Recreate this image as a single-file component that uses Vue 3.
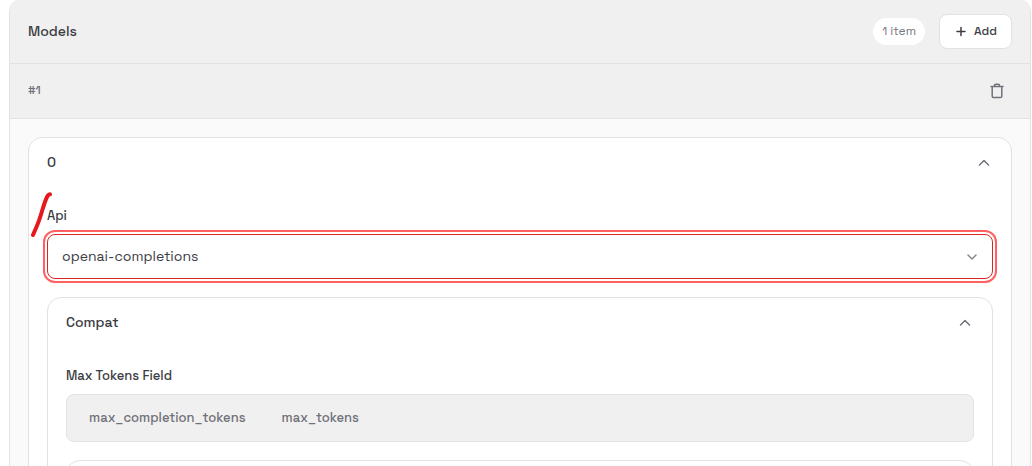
<script setup>
import { ref } from 'vue'

const api = ref('openai-completions')
const field = ref('')
const apis = ['openai-completions', 'openai-responses', 'anthropic-messages']
const fields = ['max_completion_tokens', 'max_tokens']
</script>

<template>
  <main class="page">
    <section class="panel">
      <header class="panel-head">
        <h2 class="title">Models</h2>
        <span class="count">1 item</span>
        <button type="button" class="add">
          <svg width="12" height="12" viewBox="0 0 12 12"><path d="M6 2.500v8M2 6.500h8" /></svg>
          Add
        </button>
      </header>
      <div class="item-head">
        <span class="index">#1</span>
        <button type="button" class="icon-button" aria-label="Remove item">
          <svg width="16" height="16" viewBox="0 0 16 16">
            <path d="M2 3.500h12M3.200 3.500v9.800c0 .8.500 1.300 1.300 1.300h7c.8 0 1.300-.5 1.300-1.300v-9.800M5.500 3.300v-.8c0-.9.500-1.300 1.300-1.300h2.400c.8 0 1.300.4 1.300 1.300v.8" />
          </svg>
        </button>
      </div>
      <div class="panel-body">
        <section class="card">
          <button type="button" class="card-head" aria-expanded="true">
            <span class="title">0</span>
            <svg class="chevron" width="18" height="18" viewBox="0 0 18 18"><path d="M4.500 11l4.500-4.500 4.500 4.500" /></svg>
          </button>
          <div class="card-body">
            <label class="label" for="api">Api</label>
            <div class="select-wrap">
              <select id="api" v-model="api">
                <option v-for="name in apis" :key="name">{{ name }}</option>
              </select>
              <svg class="select-arrow" width="12" height="12" viewBox="0 0 12 12"><path d="M2 4l4 4 4-4" /></svg>
              <svg class="mark" width="22" height="48" viewBox="0 0 22 48">
                <path d="M3 45C5.500 39 8 34 9.500 29C12 22 14 13 17 7C17.800 5.200 18.500 4.500 20 4.300" />
              </svg>
            </div>
            <section class="card nested">
              <button type="button" class="card-head" aria-expanded="true">
                <span class="title">Compat</span>
                <svg class="chevron" width="18" height="18" viewBox="0 0 18 18"><path d="M4.500 11l4.500-4.500 4.500 4.500" /></svg>
              </button>
              <div class="card-body">
                <span id="max-field" class="label">Max Tokens Field</span>
                <div class="segments" role="group" aria-labelledby="max-field">
                  <button
                    v-for="name in fields"
                    :key="name"
                    type="button"
                    class="segment"
                    :aria-pressed="field === name"
                    @click="field = name"
                  >{{ name }}</button>
                </div>
                <section class="card nested blank"></section>
              </div>
            </section>
          </div>
        </section>
      </div>
    </section>
  </main>
</template>

<style>
body {
  background: #fff;
}
</style>

<style scoped>
* {
  box-sizing: border-box;
}
.page {
  height: 100vh;
  overflow: hidden;
  padding: 0 1px 0 9px;
  font-family: "Space Grotesk", Inter, "Liberation Sans", sans-serif;
  color: #3c3c43;
}
svg {
  fill: none;
  stroke: currentColor;
  stroke-linecap: round;
  stroke-linejoin: round;
  stroke-width: 1.5;
  flex: none;
}
button {
  font: inherit;
  color: inherit;
  border: 0;
  background: none;
  cursor: pointer;
}
.panel {
  margin-top: -2px;
  border: 1px solid #e2e2e3;
  border-radius: 14px;
  background: #fafafa;
  overflow: hidden;
}
.panel-head {
  display: flex;
  align-items: center;
  height: 65px;
  padding: 0 18px;
  background: #f0f0f0;
  border-bottom: 1px solid #e2e2e3;
}
.title {
  margin: 0;
  font-size: 14px;
  line-height: 20px;
  font-weight: 500;
}
.count {
  margin-left: auto;
  margin-right: 14px;
  padding: 0 9px;
  border-radius: 14px;
  background: #fff;
  color: #777780;
  font-size: 12px;
  line-height: 27px;
}
.add {
  display: flex;
  align-items: center;
  gap: 7px;
  height: 35px;
  padding: 0 14px 0 15px;
  border: 1px solid #e2e2e3;
  border-radius: 8px;
  background: #fff;
  font-size: 12px;
  font-weight: 500;
}
.item-head {
  display: flex;
  align-items: center;
  justify-content: space-between;
  height: 55px;
  padding: 0 25px 0 18px;
  background: #f0f0f0;
  border-bottom: 1px solid #e2e2e3;
}
.index {
  color: #71717a;
  font-size: 12px;
  line-height: 18px;
  padding-bottom: 2px;
  font-weight: 500;
}
.icon-button {
  display: flex;
  padding: 0;
  color: #71717a;
}
.panel-body {
  padding: 18px;
}
.card {
  border: 1px solid #e2e2e3;
  border-radius: 14px;
  background: #fff;
}
.card-head {
  display: flex;
  align-items: center;
  justify-content: space-between;
  width: 100%;
  height: 50px;
  padding: 0 18px;
  text-align: left;
}
.card-head .title {
  padding-bottom: 2px;
}
.chevron {
  color: #71717a;
}
.card-body {
  padding: 18px;
}
.label {
  display: block;
  margin-bottom: 9px;
  font-size: 13px;
  line-height: 19px;
  font-weight: 500;
}
.select-wrap {
  position: relative;
}
select {
  display: block;
  width: 100%;
  height: 45px;
  padding: 0 40px 2px 14px;
  appearance: none;
  border: 1px solid #dc2626;
  border-radius: 8px;
  outline: 2px solid #ff6060;
  outline-offset: 2px;
  background: #fff;
  color: inherit;
  font: inherit;
  font-size: 14px;
}
.select-arrow {
  position: absolute;
  right: 15px;
  top: 17px;
  color: #88888e;
  pointer-events: none;
}
.mark {
  position: absolute;
  left: -17px;
  bottom: 41px;
  color: #e6191e;
  stroke-width: 4;
  pointer-events: none;
}
.nested {
  margin-top: 18px;
}
.segments {
  display: flex;
  gap: 4px;
  padding: 5px 6px;
  border: 1px solid #e2e2e3;
  border-radius: 8px;
  background: #f0f0f0;
}
.segment {
  height: 36px;
  padding: 0 16px 2px;
  color: #71717a;
  font-size: 13px;
  font-weight: 500;
}
.blank {
  height: 80px;
}
</style>
